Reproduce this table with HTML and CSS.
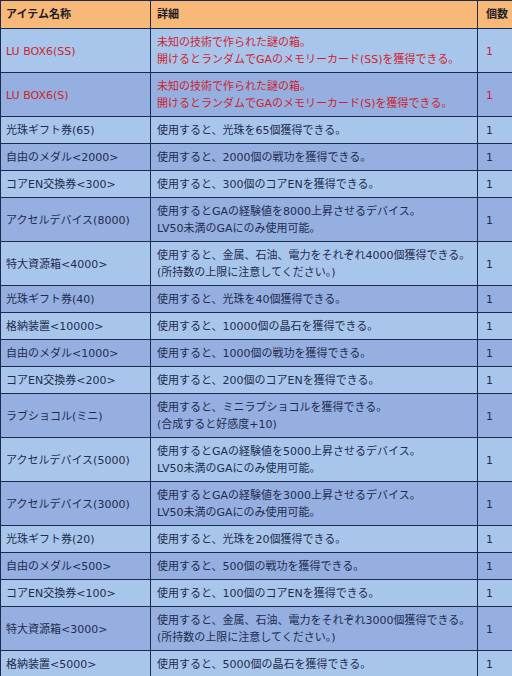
FILE: index.html
```html
<!DOCTYPE html>
<html lang="ja">
<head>
<meta charset="utf-8">
<title>アイテム一覧</title>
<link rel="stylesheet" href="styles.css">
</head>
<body>
<table class="items">
  <colgroup>
    <col class="c-name">
    <col class="c-desc">
    <col class="c-qty">
  </colgroup>
  <thead>
    <tr><th>アイテム名称</th><th>詳細</th><th>個数</th></tr>
  </thead>
  <tbody>
    <tr class="red"><td>LU BOX6(SS)</td><td>未知の技術で作られた謎の箱。<br>開けるとランダムでGAのメモリーカード(SS)を獲得できる。</td><td>1</td></tr>
    <tr class="red"><td>LU BOX6(S)</td><td>未知の技術で作られた謎の箱。<br>開けるとランダムでGAのメモリーカード(S)を獲得できる。</td><td>1</td></tr>
    <tr><td>光珠ギフト券(65)</td><td>使用すると、光珠を65個獲得できる。</td><td>1</td></tr>
    <tr><td>自由のメダル&lt;2000&gt;</td><td>使用すると、2000個の戦功を獲得できる。</td><td>1</td></tr>
    <tr><td>コアEN交換券&lt;300&gt;</td><td>使用すると、300個のコアENを獲得できる。</td><td>1</td></tr>
    <tr><td>アクセルデバイス(8000)</td><td>使用するとGAの経験値を8000上昇させるデバイス。<br>LV50未満のGAにのみ使用可能。</td><td>1</td></tr>
    <tr><td>特大資源箱&lt;4000&gt;</td><td>使用すると、金属、石油、電力をそれぞれ4000個獲得できる。<br>(所持数の上限に注意してください。)</td><td>1</td></tr>
    <tr><td>光珠ギフト券(40)</td><td>使用すると、光珠を40個獲得できる。</td><td>1</td></tr>
    <tr><td>格納装置&lt;10000&gt;</td><td>使用すると、10000個の晶石を獲得できる。</td><td>1</td></tr>
    <tr><td>自由のメダル&lt;1000&gt;</td><td>使用すると、1000個の戦功を獲得できる。</td><td>1</td></tr>
    <tr><td>コアEN交換券&lt;200&gt;</td><td>使用すると、200個のコアENを獲得できる。</td><td>1</td></tr>
    <tr><td>ラブショコル(ミニ)</td><td>使用すると、ミニラブショコルを獲得できる。<br>(合成すると好感度+10)</td><td>1</td></tr>
    <tr><td>アクセルデバイス(5000)</td><td>使用するとGAの経験値を5000上昇させるデバイス。<br>LV50未満のGAにのみ使用可能。</td><td>1</td></tr>
    <tr><td>アクセルデバイス(3000)</td><td>使用するとGAの経験値を3000上昇させるデバイス。<br>LV50未満のGAにのみ使用可能。</td><td>1</td></tr>
    <tr><td>光珠ギフト券(20)</td><td>使用すると、光珠を20個獲得できる。</td><td>1</td></tr>
    <tr><td>自由のメダル&lt;500&gt;</td><td>使用すると、500個の戦功を獲得できる。</td><td>1</td></tr>
    <tr><td>コアEN交換券&lt;100&gt;</td><td>使用すると、100個のコアENを獲得できる。</td><td>1</td></tr>
    <tr><td>特大資源箱&lt;3000&gt;</td><td>使用すると、金属、石油、電力をそれぞれ3000個獲得できる。<br>(所持数の上限に注意してください。)</td><td>1</td></tr>
    <tr><td>格納装置&lt;5000&gt;</td><td>使用すると、5000個の晶石を獲得できる。</td><td>1</td></tr>
  </tbody>
</table>
</body>
</html>
```

FILE: styles.css
```css
html, body {
  margin: 0;
  padding: 0;
  background: #ffffff;
}

body {
  font-family: "DejaVu Sans", "Noto Sans CJK JP", sans-serif;
  font-size: 11px;
  color: #1f2c4f;
}

.items {
  width: 512px;
  border-collapse: collapse;
  table-layout: fixed;
}

.c-name { width: 150px; }
.c-desc { width: 327px; }
.c-qty { width: 35px; }

.items th,
.items td {
  border: 1px solid #1c2b4d;
  text-align: left;
  vertical-align: middle;
  line-height: 17px;
  padding: 5px 5px 4px 6px;
  white-space: nowrap;
}

.items th {
  background: #f8b878;
  color: #1e1e28;
  font-weight: bold;
  padding-top: 5px;
  padding-bottom: 5px;
}

.items td:first-child,
.items th:first-child {
  padding-left: 5px;
}

.items td:last-child,
.items th:last-child {
  padding-left: 8px;
}

.items tbody tr:nth-child(odd) td {
  background: #a8c6ec;
}

.items tbody tr:nth-child(even) td {
  background: #94afe0;
}

.items tr.red td {
  color: #cf1f2e;
}
```
